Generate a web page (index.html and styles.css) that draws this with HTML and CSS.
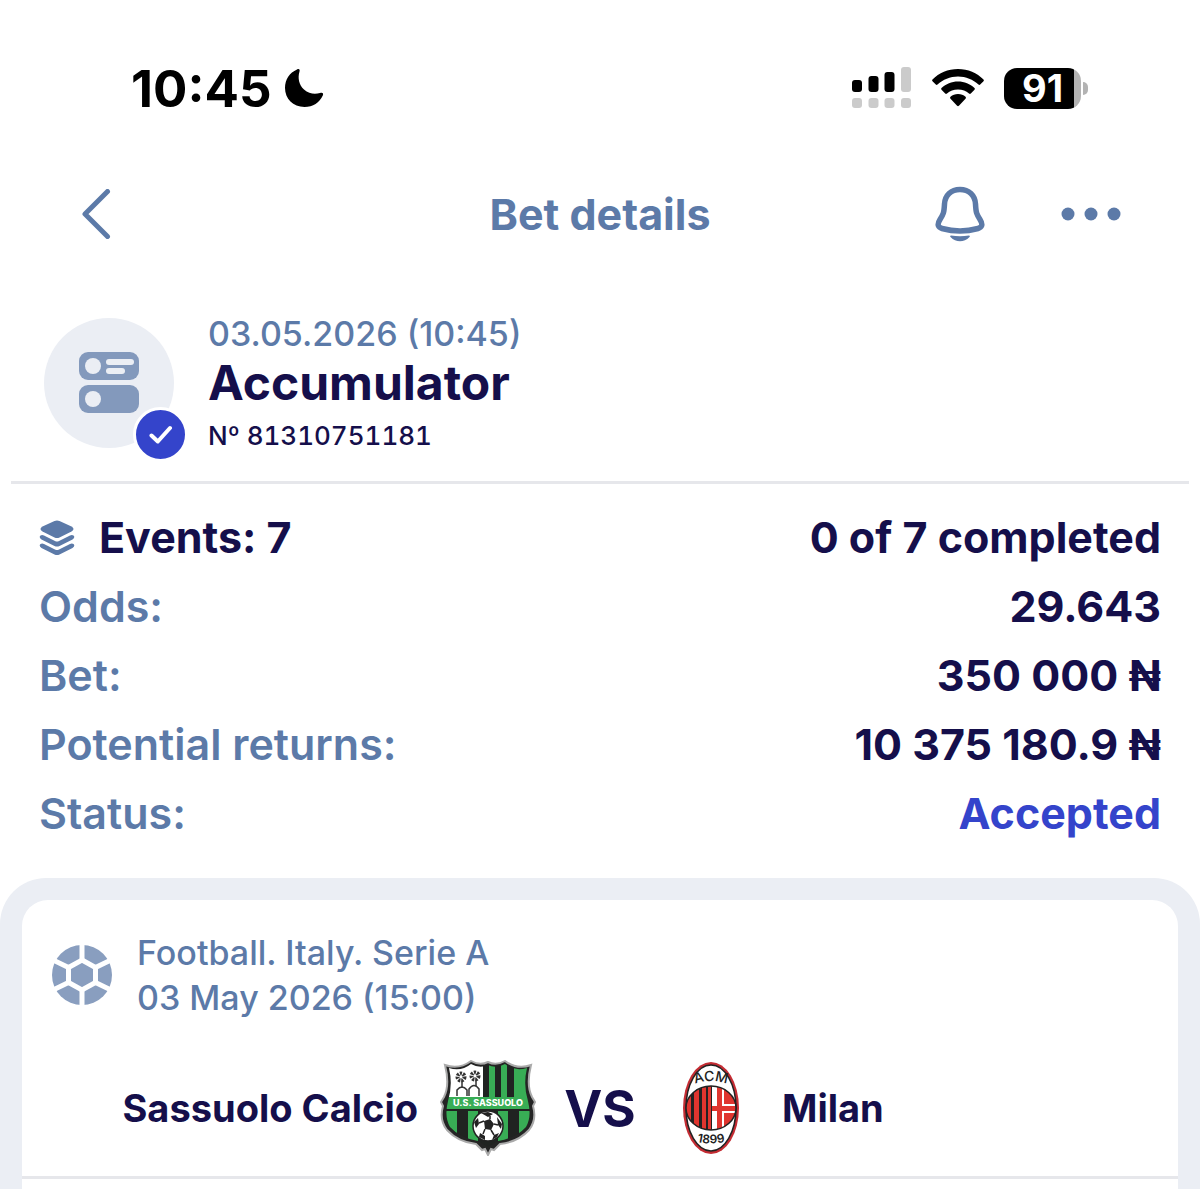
FILE: index.html
```
<!DOCTYPE html>
<html lang="en">
<head>
    <meta charset="UTF-8">
    <meta name="viewport" content="width=device-width, initial-scale=1.0">
    <title>Bet details</title>
    <link rel="stylesheet" href="styles.css">
</head>
<body>
    <!-- Status bar -->
    <div class="status-bar">
        <div class="status-time">
            <span>10:45</span>
            <svg width="40" height="40" viewBox="0 0 40 40">
                <path d="M13 1.500C15 .3 16.200 1.500 15.500 3.500C13.500 10 15 17 20 21.500C25 26 31 26.500 36 25C38.500 24 39.800 25.200 38.800 27.500C35.500 34.500 29 39 20.500 39C9 39 1 30.500 1 20C1 11.500 5.500 4.800 13 1.500Z"/>
            </svg>
        </div>
        <div class="status-icons">
            <svg width="60" height="42" viewBox="0 0 60 42">
                <rect x="0" y="13" width="10" height="12" rx="3"/>
                <rect x="16.500" y="9" width="10" height="16" rx="3"/>
                <rect x="32.500" y="5" width="10" height="20" rx="3"/>
                <g fill="#cbcbcb">
                    <rect x="49" y="0" width="10" height="25" rx="3"/>
                    <rect x="0" y="31" width="10" height="10" rx="3"/>
                    <rect x="16.500" y="31" width="10" height="10" rx="3"/>
                    <rect x="32.500" y="31" width="10" height="10" rx="3"/>
                    <rect x="49" y="31" width="10" height="10" rx="3"/>
                </g>
            </svg>
            <svg width="52" height="38" viewBox="0 0 52 38">
                <path d="M26 0C36 0 45 4 51.500 10.500Q52.300 11.300 51.500 12.200L48.200 15.500Q47.400 16.300 46.500 15.500C41 10.500 34 7.500 26 7.500S11 10.500 5.500 15.500Q4.600 16.300 3.800 15.500L.5 12.200Q-.3 11.300 .5 10.500C7 4 16 0 26 0Z"/>
                <path d="M26 12.500C32.500 12.500 38 15 42.500 19Q43.300 19.800 42.500 20.700L38.800 24.500Q38 25.300 37 24.500C34 22 30.500 20.500 26 20.500S18 22 15 24.500Q14 25.300 13.200 24.500L9.500 20.700Q8.700 19.800 9.500 19C14 15 19.500 12.500 26 12.500Z"/>
                <path d="M26 25C29 25 31.500 26 33.500 27.700Q34.500 28.700 33.500 29.800L26.900 36.800Q26 37.600 25.100 36.800L18.500 29.800Q17.500 28.700 18.500 27.700C20.500 26 23 25 26 25Z"/>
            </svg>
            <div class="battery">
                <span class="battery-body">91</span>
                <span class="battery-cap"></span>
            </div>
        </div>
    </div>

    <!-- Navigation -->
    <header class="nav">
        <button class="nav-back" aria-label="Back">
            <svg width="34" height="50" viewBox="-3 0 34 50">
                <path d="M25.500 2.500L3 25L25.500 47.500" fill="none" stroke="currentColor" stroke-width="5" stroke-linecap="round" stroke-linejoin="round"/>
            </svg>
        </button>
        <h1>Bet details</h1>
        <div class="nav-actions">
            <button aria-label="Notifications">
                <svg width="50" height="56" viewBox="0 0 50 56">
                    <path d="M25 3.500C34 3.500 40 9.500 40.500 18C41 27 41.500 28 45 33.500C48.500 39 46.500 41.500 43 42.500C32 45.500 18 45.500 7 42.500C3.500 41.500 1.500 39 5 33.500C8.500 28 9 27 9.500 18C10 9.500 16 3.500 25 3.500Z" fill="none" stroke="currentColor" stroke-width="5.500"/>
                    <path d="M16 49.500Q25 51 34 49.500C35 49.500 35 50.300 34.500 51C29 56.800 21 56.800 15.500 51C15 50.300 15 49.500 16 49.500Z" fill="currentColor"/>
                </svg>
            </button>
            <button aria-label="More">
                <svg width="60" height="14" viewBox="0 0 60 14" fill="currentColor">
                    <circle cx="7" cy="7" r="6.500"/>
                    <circle cx="30" cy="7" r="6.500"/>
                    <circle cx="53" cy="7" r="6.500"/>
                </svg>
            </button>
        </div>
    </header>

    <!-- Bet info -->
    <section class="bet-info">
        <div class="bet-type">
            <svg width="60" height="62" viewBox="0 0 60 62">
                <g fill="#8399bc">
                    <rect x="0" y="0" width="60" height="28" rx="9"/>
                    <rect x="0" y="33" width="60" height="28" rx="9"/>
                </g>
                <g fill="#ebeef4">
                    <circle cx="14" cy="14" r="8"/>
                    <circle cx="14" cy="47" r="8"/>
                    <rect x="27" y="7" width="28" height="6" rx="3"/>
                    <rect x="27" y="16" width="19" height="6" rx="3"/>
                </g>
            </svg>
            <span class="bet-check">
                <svg width="24" height="20" viewBox="0 0 24 20">
                    <path d="M2.500 10.500L8.800 16.500L21 3" fill="none" stroke="#fff" stroke-width="4" stroke-linecap="round" stroke-linejoin="round"/>
                </svg>
            </span>
        </div>
        <div class="bet-text">
            <p class="bet-date">03.05.2026 (10:45)</p>
            <h2>Accumulator</h2>
            <p class="bet-number">Nº 81310751181</p>
        </div>
    </section>

    <!-- Summary -->
    <dl class="summary">
        <div class="row">
            <dt class="events">
                <svg width="36" height="36" viewBox="0 0 36 36" fill="#5c7aa8">
                    <path d="M15.500 1Q18 0 20.500 1L32.500 6.500Q36.500 9 32.500 11.500L20.500 17.500Q18 18.500 15.500 17.500L3.500 11.500Q-.5 9 3.500 6.500Z"/>
                    <path d="M1.500 15.500Q3 14.500 5 15.500L16 21Q18 22 20 21L31 15.500Q33 14.500 34.500 15.500Q36.500 17.500 33.500 19.500L20.500 26Q18 27 15.500 26L2.500 19.500Q-.5 17.500 1.500 15.500Z"/>
                    <path d="M1.500 24Q3 23 5 24L16 29.500Q18 30.500 20 29.500L31 24Q33 23 34.500 24Q36.500 26 33.500 28L20.500 34.500Q18 35.500 15.500 34.500L2.500 28Q-.5 26 1.500 24Z"/>
                </svg>
                Events: 7
            </dt>
            <dd>0 of 7 completed</dd>
        </div>
        <div class="row">
            <dt>Odds:</dt>
            <dd>29.643</dd>
        </div>
        <div class="row">
            <dt>Bet:</dt>
            <dd>350 000 ₦</dd>
        </div>
        <div class="row">
            <dt>Potential returns:</dt>
            <dd>10 375 180.9 ₦</dd>
        </div>
        <div class="row">
            <dt>Status:</dt>
            <dd class="accepted">Accepted</dd>
        </div>
    </dl>

    <!-- Events -->
    <main class="events-panel">
        <article class="event-card">
            <div class="event-header">
                <svg width="60" height="60" viewBox="-30 -30 60 60">
                    <circle r="30" fill="#899ebf"/>
                    <g fill="none" stroke="#fff" stroke-width="5">
                        <path d="M0 -15L13.500 -7.500V7.500L0 15L-13.500 7.500V-7.500Z"/>
                        <path d="M0 -15V-31M0 15V31M13.500 -7.500L29 -15M13.500 7.500L29 15M-13.500 -7.500L-29 -15M-13.500 7.500L-29 15"/>
                    </g>
                </svg>
                <p>Football. Italy. Serie A<br>03 May 2026 (15:00)</p>
            </div>
            <div class="teams">
                <div class="team home">
                    <span>Sassuolo Calcio</span>
                    <svg width="96" height="96" viewBox="0 0 96 96">
                        <defs>
                            <clipPath id="shield">
                                <path d="M9 8Q21 12 31 4Q40 9 48 5Q56 9 65 4Q75 12 87 8Q83 25 88 41Q92 57 86 67Q76 78 58 81L48 87L38 81Q20 78 10 67Q4 57 8 41Q13 25 9 8Z"/>
                            </clipPath>
                        </defs>
                        <path d="M5 5Q19 10 31 1Q40 6 48 2Q56 6 65 1Q77 10 91 5Q86 25 92 37L95 42L93 46Q97 60 89 70Q78 82 60 84L54 90L51 89L48 95L45 89L42 90L36 84Q18 82 7 70Q-1 60 3 46L1 42L4 37Q10 25 5 5Z" fill="#242424" stroke="#aaa" stroke-width="2"/>
                        <g clip-path="url(#shield)">
                            <path d="M0 0H96V96H0Z" fill="#202321"/>
                            <path d="M0 0H43V37H0Z" fill="#fff"/>
                            <path d="M49 0H55V37H49ZM61 0H67V37H61ZM74 0H96V37H74ZM0 51H17V81H0ZM28 51H38V81H28ZM58 51H68V81H58ZM79 51H96V81H79Z" fill="#38ad55"/>
                            <path d="M0 37H96V49H0Z" fill="#38ad55"/>
                        </g>
                        <g fill="#fff" stroke="#333" stroke-width="1.500">
                            <path d="M17 36V30Q22 24 27 30V36M29 36V29Q34 22 39 29V36"/>
                            <path d="M22 28V18M36 26V17"/>
                            <circle cx="21" cy="17" r="3.500" stroke-width="4" stroke-dasharray="2 1"/>
                            <circle cx="35" cy="16" r="3.500" stroke-width="4" stroke-dasharray="2 1"/>
                        </g>
                        <text class="shield-name" x="48" y="46" text-anchor="middle">U.S. SASSUOLO</text>
                        <circle cx="48" cy="66" r="15" fill="#fff" stroke="#222" stroke-width="1.500"/>
                        <path d="M44 61L50 59L54 64L51 70L45 69ZM41 53L48 52L53 54L48 57ZM34 62L38 58L39 64L36 68ZM57 57L62 64L61 69L58 65ZM40 73L45 76L45 80L39 77ZM54 75L59 73L57 77L52 80Z" fill="#222"/>
                        <path d="M50 59V56M54 64L58 65M51 70L54 75M45 69L43 74M44 61L39 63" fill="none" stroke="#222" stroke-width="1.500"/>
                    </svg>
                </div>
                <strong class="versus">VS</strong>
                <div class="team away">
                    <svg width="96" height="96" viewBox="0 0 96 96">
                        <defs>
                            <clipPath id="badge">
                                <ellipse cx="47" cy="48" rx="25" ry="22"/>
                            </clipPath>
                        </defs>
                        <ellipse cx="47" cy="48" rx="28" ry="46" fill="#c42c33"/>
                        <ellipse cx="47" cy="48" rx="25" ry="43" fill="#fff" stroke="#222" stroke-width="1.500"/>
                        <g clip-path="url(#badge)">
                            <path d="M20 22H48V74H20Z" fill="#222"/>
                            <path d="M22 22H27V74H22ZM30 22H35V74H30ZM38 22H42V74H38ZM44 22H47V74H44Z" fill="#e0352f"/>
                            <path d="M48 22H76V74H48Z" fill="#fff"/>
                            <path d="M53 22H58V74H53ZM48 46H76V51H48ZM60 22H76V44H60ZM60 53H76V74H60Z" fill="#e0352f"/>
                        </g>
                        <ellipse cx="47" cy="48" rx="25" ry="22" fill="none" stroke="#222" stroke-width="1.500"/>
                        <path id="acm-arc" d="M28 25Q47 17 66 25" fill="none"/>
                        <path id="year-arc" d="M26 80Q47 87 68 80" fill="none"/>
                        <text class="badge-name"><textPath href="#acm-arc" startOffset="50%" text-anchor="middle">ACM</textPath></text>
                        <text class="badge-year"><textPath href="#year-arc" startOffset="50%" text-anchor="middle">1899</textPath></text>
                    </svg>
                    <span>Milan</span>
                </div>
            </div>
        </article>
    </main>
</body>
</html>
```
FILE: styles.css
```
/* Global Styles */
* {
    box-sizing: border-box;
}

body {
    font-family: Inter, "Liberation Sans", sans-serif;
    font-weight: 600;
    color: #150f4b;
    background-color: white;
    margin: 0;
    min-height: 100vh;
    display: flex;
    flex-direction: column;
}

h1, h2, p, dl, dd {
    margin: 0;
}

svg {
    display: block;
    flex-shrink: 0;
}

button {
    display: block;
    padding: 0;
    border: none;
    background: none;
    color: inherit;
    cursor: pointer;
}

/* Status Bar */
.status-bar {
    height: 176px;
    padding: 0 112px 0 131px;
    display: flex;
    justify-content: space-between;
    align-items: center;
    color: black;
}

.status-time {
    display: flex;
    align-items: center;
    gap: 12px;
    font-size: 51px;
    font-weight: 700;
}

.status-icons {
    display: flex;
    align-items: center;
    gap: 20px;
}

.battery {
    display: flex;
    align-items: center;
    gap: 2px;
}

.battery-body {
    width: 77px;
    height: 41px;
    border-radius: 13px;
    background: linear-gradient(to right, black 70px, #b3b3b3 70px);
    color: white;
    font-size: 38px;
    line-height: 41px;
    text-align: center;
    font-weight: 700;
}

.battery-cap {
    width: 5px;
    height: 13px;
    border-radius: 0 6px 6px 0;
    background-color: #b3b3b3;
}

/* Navigation */
.nav {
    height: 76px;
    padding: 0 79px;
    display: grid;
    grid-template-columns: 1fr auto 1fr;
    align-items: center;
    color: #5c7aa8;
}

.nav h1 {
    font-size: 43px;
    font-weight: 700;
}

.nav-back {
    justify-self: start;
}

.nav-actions {
    display: flex;
    justify-content: flex-end;
    align-items: center;
    gap: 76px;
}

/* Bet Info */
.bet-info {
    margin: 0 11px;
    padding: 54px 33px 21px;
    display: flex;
    align-items: center;
    gap: 34px;
    border-bottom: 3px solid #e6e7eb;
}

.bet-type {
    position: relative;
    width: 130px;
    height: 130px;
    border-radius: 50%;
    background-color: #ebeef4;
    display: flex;
    justify-content: center;
    align-items: center;
}

.bet-check {
    position: absolute;
    right: -14px;
    bottom: -14px;
    width: 55px;
    height: 55px;
    border: 3px solid white;
    border-radius: 50%;
    background-color: #3444cb;
    display: flex;
    justify-content: center;
    align-items: center;
}

.bet-text {
    padding-top: 8px;
}

.bet-date {
    font-size: 34px;
    line-height: 40px;
    font-weight: 500;
    color: #5c7aa8;
}

.bet-text h2 {
    font-size: 48px;
    line-height: 58px;
    font-weight: 700;
}

.bet-number {
    font-size: 26px;
    line-height: 48px;
    font-weight: 500;
    font-variant-numeric: tabular-nums;
}

/* Summary */
.summary {
    padding: 19px 39px 30px;
    font-size: 43px;
    line-height: 69px;
}

.row {
    display: flex;
    justify-content: space-between;
}

.row dt {
    color: #5c7aa8;
}

.row dd {
    font-weight: 700;
}

.row .events {
    display: flex;
    align-items: center;
    gap: 24px;
    font-weight: 700;
    color: #150f4b;
}

.row .accepted {
    color: #3444cb;
}

/* Events */
.events-panel {
    flex-grow: 1;
    padding: 22px 22px 0;
    border-radius: 46px 46px 0 0;
    background-color: #ebeef4;
    display: flex;
    flex-direction: column;
}

.event-card {
    flex-grow: 1;
    border-radius: 26px 26px 0 0;
    background-color: white;
}

.event-header {
    padding: 30px 30px 0;
    display: flex;
    align-items: center;
    gap: 25px;
    font-size: 34px;
    line-height: 45px;
    font-weight: 500;
    color: #5c7aa8;
}

.teams {
    padding: 40px 0 20px;
    border-bottom: 3px solid #e6e7eb;
    display: grid;
    grid-template-columns: 1fr 128px 1fr;
    align-items: center;
    font-size: 38px;
    font-weight: 700;
}

.team {
    display: flex;
    align-items: center;
    gap: 22px;
}

.home {
    justify-content: flex-end;
}

.versus {
    font-size: 51px;
    font-weight: 700;
    text-align: center;
}

/* Club Crests */
.shield-name {
    font-size: 9px;
    font-weight: 800;
    fill: white;
}

.badge-name {
    font-size: 14px;
    font-weight: 500;
    fill: #222;
}

.badge-year {
    font-size: 12px;
    font-weight: 600;
    fill: #222;
}
```
